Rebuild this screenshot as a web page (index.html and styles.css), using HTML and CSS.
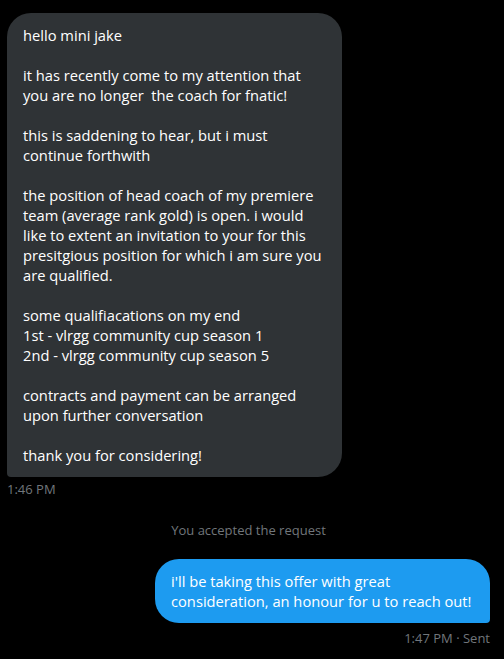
FILE: index.html
```html
<!DOCTYPE html>
<html lang="en">
<head>
    <meta charset="UTF-8">
    <meta name="viewport" content="width=device-width, initial-scale=1.0">
    <title>Messages</title>
    <link rel="stylesheet" href="styles.css">
</head>
<body>
    <main class="conversation">
        <div class="entry received">
            <div class="bubble">
                <p>hello mini jake</p>
                <p>it has recently come to my attention that<br>you are no longer&nbsp; the coach for fnatic!</p>
                <p>this is saddening to hear, but i must<br>continue forthwith</p>
                <p>the position of head coach of my premiere<br>team (average rank gold) is open. i would<br>like to extent an invitation to your for this<br>presitgious position for which i am sure you<br>are qualified.</p>
                <p>some qualifiacations on my end<br>1st - vlrgg community cup season 1<br>2nd - vlrgg community cup season 5</p>
                <p>contracts and payment can be arranged<br>upon further conversation</p>
                <p>thank you for considering!</p>
            </div>
            <div class="meta">1:46 PM</div>
        </div>

        <div class="notice">You accepted the request</div>

        <div class="entry sent">
            <div class="bubble">
                <p>i'll be taking this offer with great<br>consideration, an honour for u to reach out!</p>
            </div>
            <div class="meta">1:47 PM · Sent</div>
        </div>
    </main>
</body>
</html>
```

FILE: styles.css
```css
body {
    margin: 0;
    padding: 0;
    background-color: #000;
    color: #e7e9ea;
    font-family: "Open Sans", "Noto Sans", sans-serif;
}

.conversation {
    padding: 13px 14px 0 7px;
    display: flex;
    flex-direction: column;
}

.entry {
    display: flex;
    flex-direction: column;
}

.entry.received {
    align-items: flex-start;
}

.entry.sent {
    align-items: flex-end;
}

.bubble {
    width: 335px;
    box-sizing: border-box;
    padding: 12px 16px;
    font-size: 14.7px;
    line-height: 20px;
    color: #fff;
    border-radius: 24px;
}

.bubble p {
    margin: 0 0 20px;
}

.bubble p:last-child {
    margin-bottom: 0;
}

.received .bubble {
    background-color: #2f3336;
    border-bottom-left-radius: 4px;
}

.sent .bubble {
    background-color: #1d9bf0;
    border-bottom-right-radius: 4px;
}

.meta {
    margin-top: 4px;
    font-size: 13px;
    line-height: 16px;
    color: #71767b;
}

.sent .meta {
    margin-top: 7px;
}

.notice {
    margin: 25px 0 21px;
    text-align: center;
    font-size: 13px;
    line-height: 16px;
    color: #71767b;
}
```
